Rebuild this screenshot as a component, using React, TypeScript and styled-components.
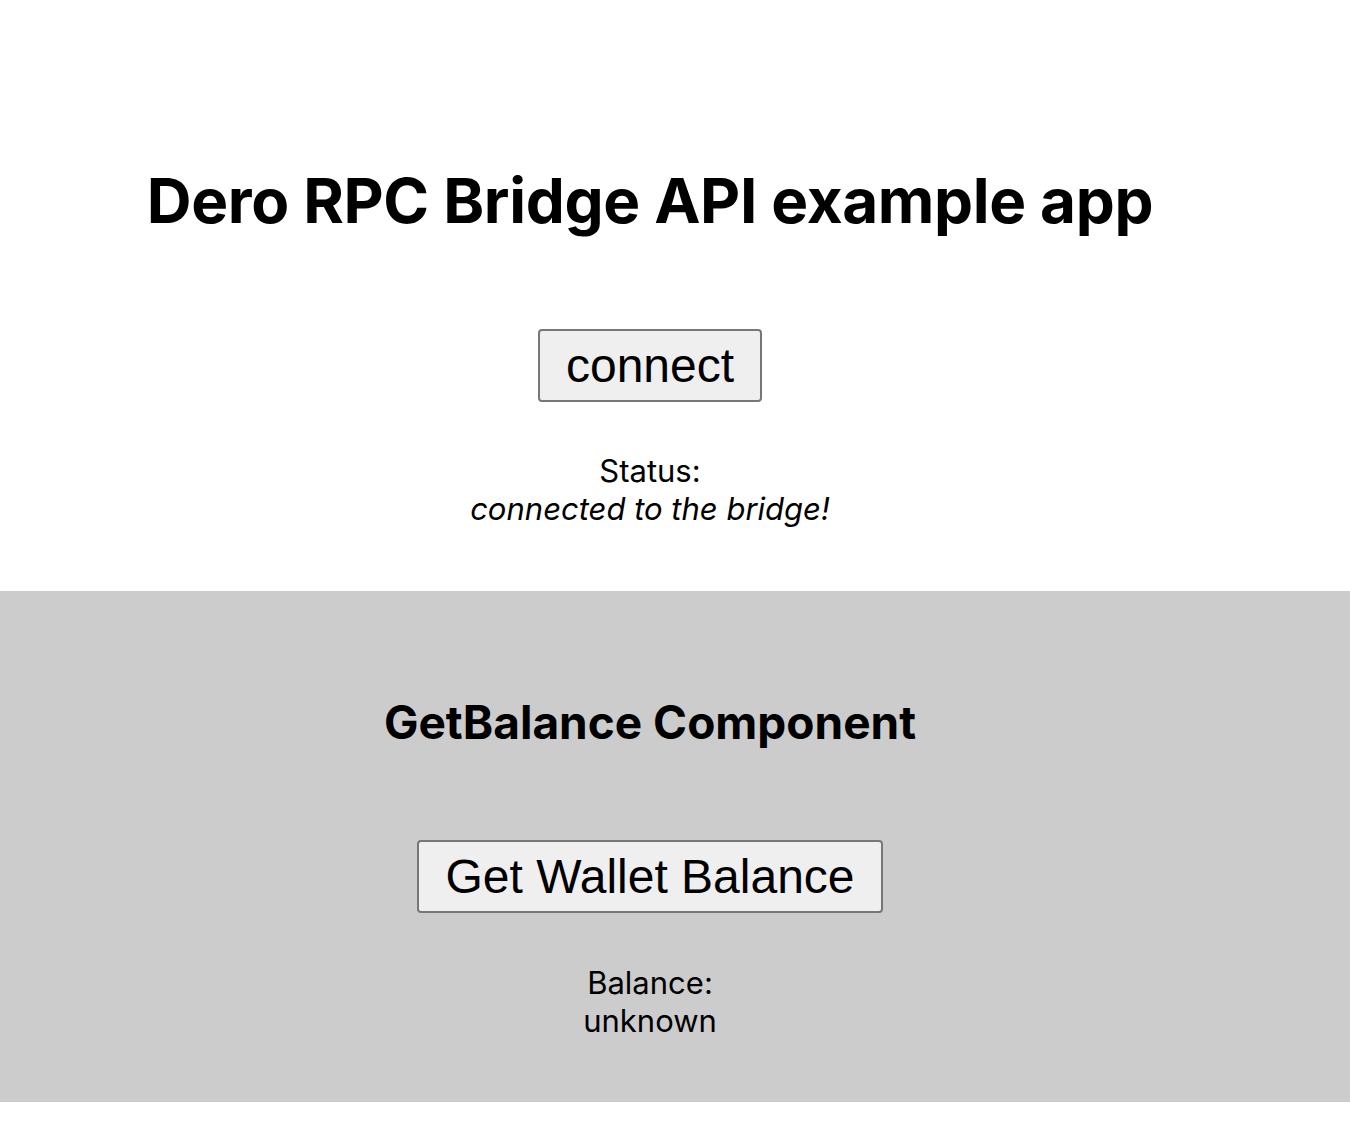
import * as React from 'react';
import styled, { createGlobalStyle } from 'styled-components';

const GlobalStyle = createGlobalStyle`
	html, body {
		margin: 0;
		padding: 0;
		background: #ffffff;
	}
	body {
		font-family: Inter, "Noto Sans", sans-serif;
		color: #000000;
	}
`;

const Page = styled.div`
	display: flex;
	flex-direction: column;
	width: 100%;
	min-height: 1134px;
`;

const Column = styled.div`
	display: flex;
	flex-direction: column;
	align-items: center;
	width: 1300px;
	text-align: center;
`;

const Header = styled(Column)`
	padding: 163px 0 63px;
`;

const GrayBand = styled.section`
	background-color: #cccccc;
	width: 100%;
`;

const BandInner = styled(Column)`
	padding: 103px 0 62px;
`;

const Title = styled.h1`
	margin: 0;
	font-size: 62px;
	font-weight: 700;
	line-height: 75px;
	letter-spacing: -0.35px;
`;

const SubTitle = styled.h2`
	margin: 0;
	font-size: 46px;
	font-weight: 700;
	line-height: 56px;
`;

const ActionButton = styled.button<{ $gap: number }>`
	margin-top: ${(p) => p.$gap}px;
	font-family: 'Liberation Sans', Arial, sans-serif;
	font-size: 48px;
	line-height: 55px;
	color: #000;
	background-color: #efefef;
	border: 2px solid #777777;
	border-radius: 4px;
	padding: 7px 26px;
	cursor: pointer;
`;

const Info = styled.div<{ $gap: number }>`
	margin-top: ${(p) => p.$gap}px;
	font-size: 31px;
	line-height: 38px;
	display: flex;
	flex-direction: column;
	align-items: center;
`;

const Value = styled.span<{ $italic?: boolean }>`
	font-style: ${(p) => (p.$italic ? 'italic' : 'normal')};
`;

const App: React.FC = () => {
	const [status, setStatus] = React.useState('connected to the bridge!');
	const [balance, setBalance] = React.useState('unknown');

	return (
		<Page>
			<GlobalStyle />
			<Header>
				<Title>Dero RPC Bridge API example app</Title>
				<ActionButton $gap={91} onClick={() => setStatus('connected to the bridge!')}>
					connect
				</ActionButton>
				<Info $gap={50}>
					<span>Status:</span>
					<Value $italic>{status}</Value>
				</Info>
			</Header>
			<GrayBand>
				<BandInner>
					<SubTitle>GetBalance Component</SubTitle>
					<ActionButton $gap={90} onClick={() => setBalance('unknown')}>
						Get Wallet Balance
					</ActionButton>
					<Info $gap={51}>
						<span>Balance:</span>
						<Value>{balance}</Value>
					</Info>
				</BandInner>
			</GrayBand>
		</Page>
	);
};

export default App;
